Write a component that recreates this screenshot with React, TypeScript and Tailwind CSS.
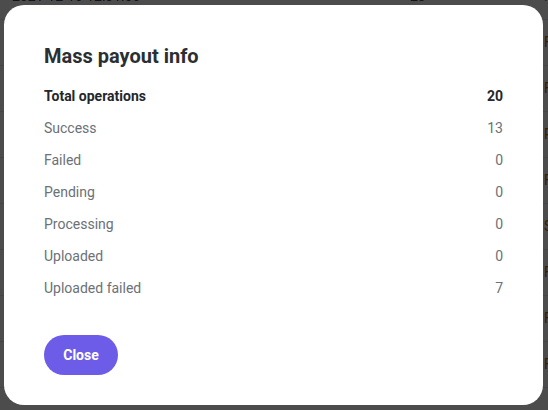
const stats = [
  { label: "Total operations", value: 20, bold: true },
  { label: "Success", value: 13 },
  { label: "Failed", value: 0 },
  { label: "Pending", value: 0 },
  { label: "Processing", value: 0 },
  { label: "Uploaded", value: 0 },
  { label: "Uploaded failed", value: 7 },
];

const bgRows = [
  { date: "2021-12-10 12:31:00", count: 23, status: "Finished" },
  { date: "2021-12-10 12:20:00", count: 22, status: "Finished" },
  { date: "2021-12-09 18:04:00", count: 20, status: "Finished" },
  { date: "2021-12-09 11:45:00", count: 18, status: "Pending" },
  { date: "2021-12-08 16:12:00", count: 12, status: "Finished" },
  { date: "2021-12-08 10:02:00", count: 9, status: "Success" },
  { date: "2021-12-07 15:30:00", count: 31, status: "Finished" },
  { date: "2021-12-07 09:11:00", count: 14, status: "Finished" },
  { date: "2021-12-06 13:40:00", count: 6, status: "Finished" },
];

const App = () => {
  return (
    <div
      className="relative w-[548px] h-[410px] overflow-hidden bg-white"
      style={{ fontFamily: "Roboto, 'Liberation Sans', sans-serif" }}
    >
      {/* page behind the dialog */}
      <div className="-mt-[26px] flex flex-col">
        {bgRows.map((r, i) => (
          <div
            key={i}
            className="flex items-center h-[46px] pl-[12px] border-b border-gray-200 text-[14px] text-gray-700 whitespace-nowrap"
          >
            <span className="w-[398px] shrink-0">{r.date}</span>
            <span className="w-[134px] shrink-0">{r.count}</span>
            <span className="text-[#b26a00]">{r.status}</span>
          </div>
        ))}
      </div>

      {/* backdrop */}
      <div className="absolute inset-0 bg-black/70" />

      {/* dialog */}
      <div className="absolute left-[4px] top-[5px] w-[539px] h-[400px] rounded-[20px] bg-white px-[40px] pt-[37px] pb-[30px] flex flex-col">
        <h2 className="text-[20px] leading-[28px] font-bold text-[#2b2f33]">
          Mass payout info
        </h2>
        <div className="mt-[16px] flex flex-col gap-[12px]">
          {stats.map((s) => (
            <div
              key={s.label}
              className={
                s.bold
                  ? "flex justify-between text-[14px] leading-[20px] font-bold text-[#24272b]"
                  : "flex justify-between text-[14px] leading-[20px] text-[#6b7177]"
              }
            >
              <span>{s.label}</span>
              <span>{s.value}</span>
            </div>
          ))}
        </div>
        <div className="mt-auto">
          <button className="w-[74px] h-[40px] rounded-full bg-[#6c5ce7] text-white text-[14px] font-bold">
            Close
          </button>
        </div>
      </div>
    </div>
  );
};

export default App;
